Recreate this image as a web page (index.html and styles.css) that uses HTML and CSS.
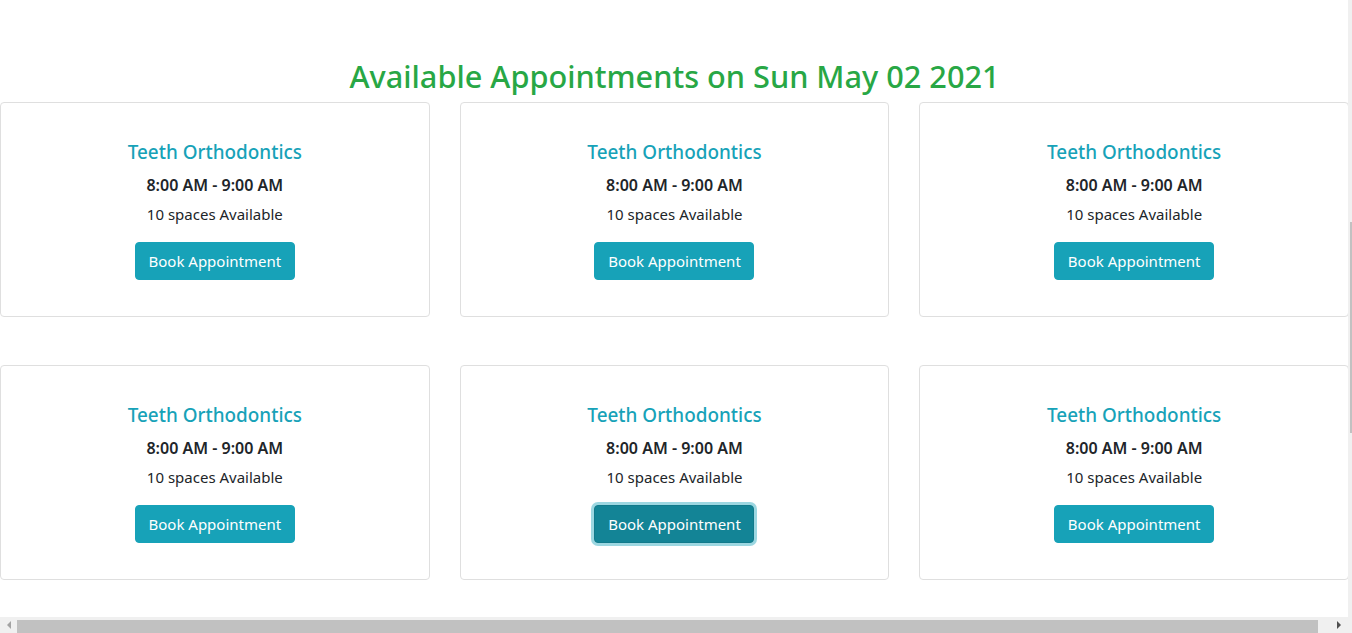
FILE: index.html
```html
<!DOCTYPE html>
<html lang="en">
<head>
<meta charset="utf-8">
<title>Available Appointments</title>
<link rel="stylesheet" href="styles.css">
</head>
<body>
<main class="page">
  <h2 class="page-title">Available Appointments on Sun May 02 2021</h2>
  <section class="grid">
    <div class="card">
      <h5 class="card-title">Teeth Orthodontics</h5>
      <p class="time">8:00 AM - 9:00 AM</p>
      <p class="spaces">10 spaces Available</p>
      <button class="btn">Book Appointment</button>
    </div>
    <div class="card">
      <h5 class="card-title">Teeth Orthodontics</h5>
      <p class="time">8:00 AM - 9:00 AM</p>
      <p class="spaces">10 spaces Available</p>
      <button class="btn">Book Appointment</button>
    </div>
    <div class="card">
      <h5 class="card-title">Teeth Orthodontics</h5>
      <p class="time">8:00 AM - 9:00 AM</p>
      <p class="spaces">10 spaces Available</p>
      <button class="btn">Book Appointment</button>
    </div>
    <div class="card">
      <h5 class="card-title">Teeth Orthodontics</h5>
      <p class="time">8:00 AM - 9:00 AM</p>
      <p class="spaces">10 spaces Available</p>
      <button class="btn">Book Appointment</button>
    </div>
    <div class="card">
      <h5 class="card-title">Teeth Orthodontics</h5>
      <p class="time">8:00 AM - 9:00 AM</p>
      <p class="spaces">10 spaces Available</p>
      <button class="btn btn-focus">Book Appointment</button>
    </div>
    <div class="card">
      <h5 class="card-title">Teeth Orthodontics</h5>
      <p class="time">8:00 AM - 9:00 AM</p>
      <p class="spaces">10 spaces Available</p>
      <button class="btn">Book Appointment</button>
    </div>
  </section>
</main>
<div class="vscroll"><div class="vscroll-thumb"></div></div>
<div class="hscroll">
  <span class="arrow arrow-left"></span>
  <div class="hscroll-thumb"></div>
  <span class="arrow arrow-right"></span>
</div>
</body>
</html>
```
FILE: styles.css
```css
html, body {
  margin: 0;
  padding: 0;
  background: #fff;
  overflow: hidden;
}
body {
  font-family: "Noto Sans", "Open Sans", sans-serif;
  color: #212529;
  font-size: 15px;
}
.page {
  width: 1349px;
  padding-top: 57px;
}
.page-title {
  margin: 0 0 7px;
  text-align: center;
  font-size: 30.7px;
  line-height: 38px;
  font-weight: 500;
  color: #28a745;
}
.grid {
  display: grid;
  grid-template-columns: repeat(3, 1fr);
  column-gap: 30px;
  row-gap: 48px;
}
.card {
  height: 215px;
  box-sizing: border-box;
  border: 1px solid #dfdfdf;
  border-radius: 4px;
  padding: 37px 20px 36px;
  text-align: center;
  display: flex;
  flex-direction: column;
  align-items: center;
}
.card-title {
  margin: 0 0 9px;
  font-size: 18.9px;
  line-height: 24px;
  height: 24px;
  font-weight: 500;
  color: #17a2b8;
}
.time {
  margin: 0 0 5px;
  font-size: 16px;
  font-weight: 600;
  line-height: 24px;
  height: 24px;
}
.spaces {
  margin: 0 0 16px;
  line-height: 24px;
  height: 24px;
}
.btn {
  font-family: inherit;
  font-size: 15px;
  line-height: 24px;
  height: 38px;
  padding: 6px 12px;
  color: #fff;
  background: #17a2b8;
  border: 1px solid #17a2b8;
  border-radius: 4px;
  width: 160px;
  white-space: nowrap;
  flex-shrink: 0;
}
.btn-focus {
  background: #138496;
  border-color: #117a8b;
  box-shadow: 0 0 0 3px rgba(58, 176, 195, 0.5);
}
.vscroll {
  position: fixed;
  top: 0;
  right: 0;
  width: 4px;
  height: 617px;
  background: #f0f0f0;
}
.vscroll-thumb {
  margin-top: 222px;
  margin-left: 2px;
  width: 2px;
  height: 211px;
  background: #c1c1c1;
}
.hscroll {
  position: fixed;
  left: 0;
  bottom: 0;
  width: 1352px;
  height: 16px;
  background: #f0f0f0;
  display: flex;
  align-items: flex-end;
}
.hscroll-thumb {
  height: 13px;
  width: 1301px;
  margin-left: 6px;
  background: #c1c1c1;
}
.arrow {
  width: 0;
  height: 0;
  border-top: 4px solid transparent;
  border-bottom: 4px solid transparent;
  align-self: center;
}
.arrow-left {
  margin-left: 7px;
  border-right: 4px solid #a3a3a3;
}
.arrow-right {
  margin-left: 19px;
  border-left: 4px solid #505050;
}
```
